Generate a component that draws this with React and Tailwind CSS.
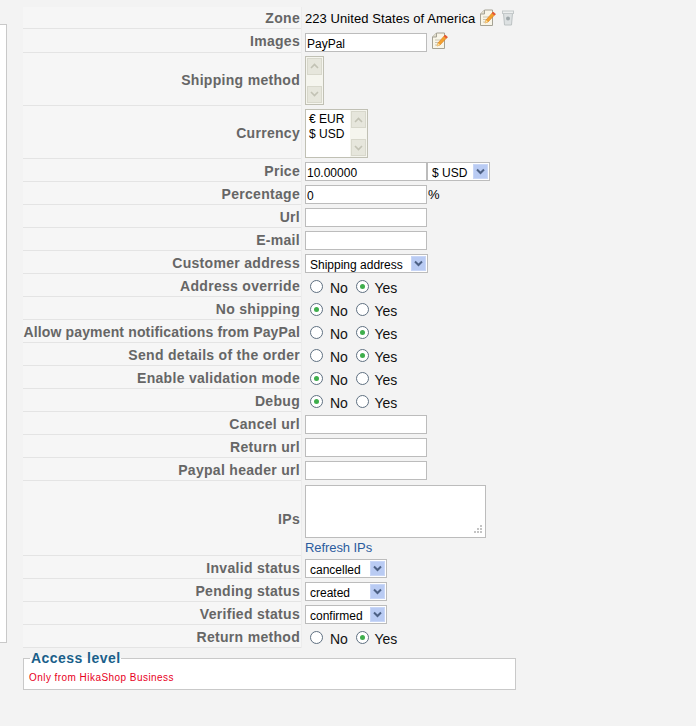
import React from "react";

const EditIcon = () => (
  <svg width="18" height="18" viewBox="0 0 18 18" className="shrink-0">
    <path d="M1.5 5 L5.5 1 H13.5 V16.5 H1.5 Z" fill="#f8f5e8" stroke="#a5a294" />
    <path d="M1.5 5 H5.5 V1" fill="#e2decd" stroke="#a5a294" />
    <path d="M4 8 H10 M4 10.5 H8 M4 13 H7" stroke="#c9c4b0" />
    <path d="M6 14 L7 11 L14 3 L16.5 5 L9 13 Z" fill="#f3a12e" stroke="#d87a1f" strokeWidth="0.6" />
    <path d="M14 3 L16.5 5 L15.5 6.5 L12.8 4.3 Z" fill="#e5503c" />
    <path d="M6 14 L7 11 L9 13 Z" fill="#f7e4a0" />
  </svg>
);

const TrashIcon = () => (
  <svg width="14" height="16" viewBox="0 0 14 16" className="shrink-0">
    <path d="M2.5 3 H11.5 L10.5 15 H3.5 Z" fill="#dde1e2" stroke="#bcc2c3" />
    <rect x="1.5" y="1" width="11" height="2.5" fill="#eceeee" stroke="#c4c9ca" />
    <circle cx="7" cy="8.5" r="2" fill="#9fa8ab" />
  </svg>
);

const ChevronBtn = ({ up }) => (
  <div className="w-[15px] h-[17px] border border-[#d8d8cc] bg-[#e6e6dc] flex items-center justify-center">
    <svg width="9" height="6" viewBox="0 0 9 6">
      <path d={up ? "M1 5 L4.5 1.5 L8 5" : "M1 1 L4.5 4.5 L8 1"} fill="none" stroke="#c2c2b4" strokeWidth="1.6" />
    </svg>
  </div>
);

const ScrollBar = () => (
  <div className="w-[17px] h-full bg-[#f5f5ee] flex flex-col justify-between items-center py-px">
    <ChevronBtn up />
    <ChevronBtn />
  </div>
);

const Select = ({ value, width }) => (
  <div className={`${width} h-[19px] bg-white border border-[#bcbcbc] flex items-center justify-between pl-1 pr-px`}>
    <span className="text-[12px] text-black leading-none pt-[3px]">{value}</span>
    <div className="w-[15px] h-[15px] bg-[#b9cbf3] border border-[#c8d6f7] flex items-center justify-center">
      <svg width="9" height="7" viewBox="0 0 9 7">
        <path d="M1 1.5 L4.5 5 L8 1.5" fill="none" stroke="#4d6185" strokeWidth="2" />
      </svg>
    </div>
  </div>
);

const TextInput = ({ value = "" }) => (
  <input
    readOnly
    value={value}
    className="w-[122px] h-[19px] bg-white border border-[#bcbcbc] px-px pt-[2px] text-[12px] text-black outline-none"
  />
);

const Radio = ({ on }) => (
  <span className="w-[13px] h-[13px] rounded-full border border-[#5f7081] bg-white flex items-center justify-center shrink-0">
    {on && <span className="w-[5px] h-[5px] rounded-full bg-[#3fae4c]" />}
  </span>
);

const YesNo = ({ yes }) => (
  <div className="flex items-center h-full -mt-px pl-[5px] text-[14px] text-[#111]">
    <Radio on={!yes} />
    <span className="ml-[7px] mt-[4px] tracking-[-0.2px]">No</span>
    <span className="ml-[8px]"><Radio on={yes} /></span>
    <span className="ml-[6px] mt-[4px]">Yes</span>
  </div>
);

const Row = ({ label, h = "h-[23px]", spacing = "tracking-[0.3px]", children }) => (
  <div className={`flex ${h}`}>
    <div className={`w-[278px] shrink-0 bg-[#f6f6f6] border-b border-[#e4e4e4] flex items-center justify-end pr-px pt-[2px] text-[14px] font-bold text-[#666] whitespace-nowrap ${spacing}`}>
      {label}
    </div>
    <div className="flex-1 border-l border-[#ececec] pl-[3px] pt-[2px] flex items-center">{children}</div>
  </div>
);

const App = () => {
  return (
    <div className="w-[696px] h-[726px] bg-[#f3f3f3] overflow-hidden flex font-['Liberation_Sans',sans-serif]">
      <div className="w-[7px] h-[619px] mt-[24px] mr-[16px] bg-white border border-l-0 border-[#c9c9c9] shrink-0" />

      <div className="w-[493px] pt-[7px]">
        <Row label="Zone" h="h-[22px]">
          <span className="text-[13px] tracking-[0.07px] text-black">223 United States of America</span>
          <span className="ml-[4px] -mt-[2px]"><EditIcon /></span>
          <span className="ml-[4px] -mt-[2px]"><TrashIcon /></span>
        </Row>
        <Row label="Images" h="h-[24px]">
          <span className="mt-px flex"><TextInput value="PayPal" /></span>
          <span className="ml-[4px] -mt-[2px]"><EditIcon /></span>
        </Row>
        <Row label="Shipping method" h="h-[53px]">
          <div className="w-[19px] h-[49px] -mt-px border border-[#c0c0b4]"><ScrollBar /></div>
        </Row>
        <Row label="Currency" h="h-[53px]">
          <div className="w-[63px] h-[49px] bg-white border border-[#c0c0b4] flex justify-between">
            <div className="pl-[3px] pt-[2px] text-[12px] leading-[15px] text-black">
              <div>€ EUR</div>
              <div>$ USD</div>
            </div>
            <ScrollBar />
          </div>
        </Row>
        <Row label="Price">
          <TextInput value="10.00000" />
          <Select value="$ USD" width="w-[63px]" />
        </Row>
        <Row label="Percentage">
          <TextInput value="0" />
          <span className="ml-px text-[13px] text-black">%</span>
        </Row>
        <Row label="Url"><TextInput /></Row>
        <Row label="E-mail"><TextInput /></Row>
        <Row label="Customer address"><Select value="Shipping address" width="w-[123px]" /></Row>
        <Row label="Address override"><YesNo yes /></Row>
        <Row label="No shipping"><YesNo /></Row>
        <Row label="Allow payment notifications from PayPal" spacing="tracking-[0.15px]"><YesNo yes /></Row>
        <Row label="Send details of the order"><YesNo yes /></Row>
        <Row label="Enable validation mode"><YesNo /></Row>
        <Row label="Debug"><YesNo /></Row>
        <Row label="Cancel url"><TextInput /></Row>
        <Row label="Return url"><TextInput /></Row>
        <Row label="Paypal header url"><TextInput /></Row>
        <Row label="IPs" h="h-[75px]">
          <div className="flex flex-col">
            <div className="relative w-[181px] h-[53px] bg-white border border-[#bcbcbc]">
              <svg width="11" height="11" viewBox="0 0 11 11" className="absolute right-[2px] bottom-[2px]">
                <path d="M8 1h2v2H8z M5 4h2v2H5z M8 4h2v2H8z M2 7h2v2H2z M5 7h2v2H5z M8 7h2v2H8z" fill="#c4c4c4" />
              </svg>
            </div>
            <span className="mt-[2px] text-[13px] leading-[15px] tracking-[-0.07px] text-[#2b5c9e]">Refresh IPs</span>
          </div>
        </Row>
        <Row label="Invalid status"><Select value="cancelled" width="w-[82px]" /></Row>
        <Row label="Pending status"><Select value="created" width="w-[82px]" /></Row>
        <Row label="Verified status"><Select value="confirmed" width="w-[82px]" /></Row>
        <Row label="Return method"><YesNo yes /></Row>

        <fieldset className="mt-[3px] h-[39px] bg-white border border-[#c9c9c9] pl-[5px] relative">
          <legend className="ml-px px-px text-[14px] leading-[14px] font-bold text-[#1a5f8a] tracking-[0.45px]">Access level</legend>
          <div className="mt-[5px] text-[10px] text-[#e8001c] tracking-[0.45px]">Only from HikaShop Business</div>
        </fieldset>
      </div>
    </div>
  );
};

export default App;
